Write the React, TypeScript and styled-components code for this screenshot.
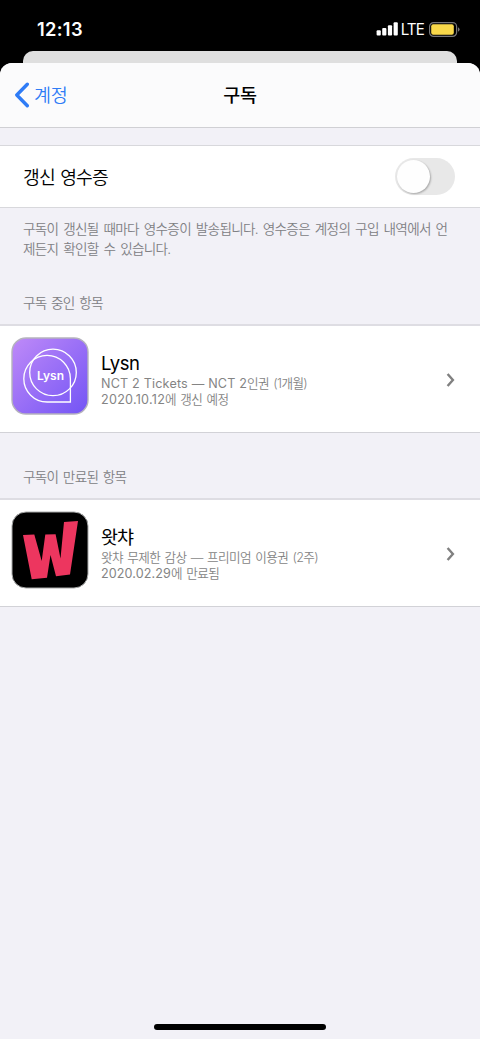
import React from "react";
import styled, { createGlobalStyle } from "styled-components";

const GlobalStyle = createGlobalStyle`
  * { box-sizing: border-box; }
  body { margin: 0; background: #000; }
`;

const Screen = styled.div`
  position: relative;
  display: flex;
  flex-direction: column;
  width: 480px;
  height: 1039px;
  overflow: hidden;
  background: #000;
  color: #000;
  font-family: Inter, "Noto Sans CJK KR", sans-serif;
  white-space: nowrap;
`;

const StatusBar = styled.div`
  display: flex;
  justify-content: space-between;
  align-items: center;
  flex: none;
  height: 51px;
  padding: 7px 20px 0 37px;
  color: #fff;
`;

const Clock = styled.span`
  font-size: 18.3px;
  font-weight: 600;
  letter-spacing: 0.3px;
`;

const StatusIcons = styled.div`
  display: flex;
  align-items: center;
  gap: 3px;
`;

const Network = styled.span`
  font-size: 15.2px;
  letter-spacing: -0.9px;
  margin: 0 2px 0 -0.5px;
`;

const BackSheet = styled.div`
  flex: none;
  height: 12px;
  margin: 0 23px;
  border-radius: 10px 10px 0 0;
  background: #dfdfdf;
`;

const Sheet = styled.main`
  display: flex;
  flex-direction: column;
  flex: 1;
  border-radius: 12px 12px 0 0;
  overflow: hidden;
  background: #f2f1f7;
`;

const NavBar = styled.header`
  display: grid;
  grid-template-columns: 1fr auto 1fr;
  align-items: center;
  flex: none;
  height: 65px;
  padding: 0 14px;
  background: #fbfbfc;
  border-bottom: 1px solid #d0d0d4;
`;

const BackButton = styled.a`
  display: flex;
  align-items: center;
  gap: 4px;
  color: #2f7cf6;
  font-size: 18.5px;
  font-weight: 350;
  letter-spacing: -0.3px;
`;

const BackLabel = styled.span`
  padding-bottom: 2px;
`;

const Title = styled.h1`
  margin: 0;
  padding-bottom: 2px;
  font-size: 18.5px;
  font-weight: 500;
  letter-spacing: -0.2px;
`;

const SettingRow = styled.section`
  display: flex;
  justify-content: space-between;
  align-items: center;
  flex: none;
  height: 63px;
  margin-top: 17px;
  padding: 0 25px 0 23px;
  background: #fff;
  border-top: 1px solid #d8d8dc;
  border-bottom: 1px solid #d8d8dc;
`;

const SettingLabel = styled.span`
  padding-bottom: 2px;
  font-size: 18.2px;
  font-weight: 350;
  letter-spacing: -0.8px;
  word-spacing: 1px;
`;

const Switch = styled.div`
  width: 60px;
  height: 37px;
  padding: 2px;
  border-radius: 19px;
  background: #e8e8e8;
`;

const Knob = styled.div`
  width: 33px;
  height: 33px;
  border-radius: 50%;
  background: #fefefe;
  box-shadow: 1px 1px 2px rgba(0, 0, 0, 0.28);
`;

const Note = styled.p`
  flex: none;
  height: 72px;
  margin: 0;
  padding: 12px 0 0 23px;
  color: #808084;
  font-size: 13.6px;
  font-weight: 350;
  line-height: 19.5px;
  letter-spacing: -0.72px;
  word-spacing: 1.8px;
`;

const SectionTitle = styled.h2<{ $height: number }>`
  flex: none;
  height: ${(p) => p.$height}px;
  display: flex;
  align-items: flex-end;
  margin: 0;
  padding: 0 23px 11px;
  color: #808084;
  font-size: 13.6px;
  font-weight: 350;
  line-height: 20px;
  letter-spacing: -0.72px;
  word-spacing: 1.4px;
`;

const AppRow = styled.section`
  display: flex;
  align-items: flex-start;
  flex: none;
  height: 109px;
  padding: 11px 24px 0 11px;
  background: #fff;
  border-top: 2px solid #dedde3;
  border-bottom: 1px solid #d2d2d7;
`;

const AppIcon = styled.svg`
  flex: none;
  width: 78px;
  height: 78px;
`;

const Info = styled.div`
  flex: 1;
  padding: 14px 0 0 12px;
`;

const AppName = styled.div<{ $spacing: number }>`
  height: 25px;
  font-size: 18.5px;
  font-weight: 400;
  line-height: 24px;
  letter-spacing: ${(p) => p.$spacing}px;
`;

const Detail = styled.div<{ $spacing: number }>`
  height: 16px;
  color: #848484;
  font-size: 12.6px;
  line-height: 16px;
  letter-spacing: ${(p) => p.$spacing}px;
`;

const Kr = styled.span<{ $spacing?: number }>`
  font-weight: 350;
  letter-spacing: ${(p) => p.$spacing ?? -0.62}px;
  word-spacing: 1.4px;
`;

const Chevron = styled.svg`
  width: 10px;
  height: 14px;
  margin-top: 36px;
`;

const HomeBar = styled.div`
  width: 172px;
  height: 6px;
  margin: auto auto 9px;
  border-radius: 3px;
  background: #000;
`;

const Disclosure = () => (
  <Chevron viewBox="0 0 10 14">
    <path d="M1.6 1 L6.9 7 L1.6 13" fill="none" stroke="#808080" strokeWidth="2.4" />
  </Chevron>
);

export default function App() {
  return (
    <Screen>
      <GlobalStyle />
      <StatusBar>
        <Clock>12:13</Clock>
        <StatusIcons>
          <svg width="22" height="14" viewBox="0 0 22 14" fill="#fff">
            <rect x="0.6" y="8.3" width="4.2" height="5.2" rx="1" />
            <rect x="6.2" y="6" width="4.2" height="7.5" rx="1" />
            <rect x="11.9" y="3.2" width="4.2" height="10.3" rx="1" />
            <rect x="17.6" y="0.2" width="4.2" height="13.3" rx="1" />
          </svg>
          <Network>LTE</Network>
          <svg width="31" height="15" viewBox="0 0 31 15">
            <rect x="0.6" y="0.6" width="27" height="13.8" rx="4" fill="none" stroke="#77777a" strokeWidth="1.2" />
            <rect x="2.2" y="2.3" width="22.6" height="10.4" rx="2" fill="#f8d84a" />
            <path d="M29 5.2 Q30.6 6 30.6 7.5 Q30.6 9 29 9.8 Z" fill="#77777a" />
          </svg>
        </StatusIcons>
      </StatusBar>
      <BackSheet />
      <Sheet>
        <NavBar>
          <BackButton>
            <svg width="16" height="26" viewBox="0 0 16 26">
              <path d="M13.3 2.2 L2.8 13 L13.3 23.8" fill="none" stroke="#2f7cf6" strokeWidth="3.4" strokeLinecap="round" strokeLinejoin="round" />
            </svg>
            <BackLabel>계정</BackLabel>
          </BackButton>
          <Title>구독</Title>
        </NavBar>
        <SettingRow>
          <SettingLabel>갱신 영수증</SettingLabel>
          <Switch>
            <Knob />
          </Switch>
        </SettingRow>
        <Note>
          구독이 갱신될 때마다 영수증이 발송됩니다. 영수증은 계정의 구입 내역에서 언
          <br />
          제든지 확인할 수 있습니다.
        </Note>
        <SectionTitle $height={44}>구독 중인 항목</SectionTitle>
        <AppRow>
          <AppIcon viewBox="0 0 78 78">
            <defs>
              <linearGradient id="violet" x1="0" y1="0" x2="1" y2="1">
                <stop offset="0" stopColor="#bf8af8" />
                <stop offset="1" stopColor="#7354f5" />
              </linearGradient>
            </defs>
            <rect x="1" y="1" width="76" height="76" rx="14" fill="url(#violet)" stroke="#b5b3bd" strokeWidth="1.4" />
            <g fill="none" stroke="#fff" strokeWidth="1.3">
              <circle cx="42" cy="35.4" r="23.3" />
              <path d="M59.4 65 H36.1 A23.3 23.3 0 1 1 59.4 41.7 Z" />
            </g>
            <text x="26" y="43" textLength="27" lengthAdjust="spacingAndGlyphs" fill="#fff" fontFamily="Inter, sans-serif" fontSize="11.5" fontWeight="600">Lysn</text>
          </AppIcon>
          <Info>
            <AppName $spacing={-0.45}>Lysn</AppName>
            <Detail $spacing={0.18}>
              NCT 2 Tickets — NCT 2<Kr>인권 (1개월)</Kr>
            </Detail>
            <Detail $spacing={0.25}>
              2020.10.12<Kr>에 갱신 예정</Kr>
            </Detail>
          </Info>
          <Disclosure />
        </AppRow>
        <SectionTitle $height={65}>구독이 만료된 항목</SectionTitle>
        <AppRow>
          <AppIcon viewBox="0 0 78 78">
            <rect x="1" y="1" width="76" height="76" rx="14" fill="#000" stroke="#a9aaaa" strokeWidth="1" />
            <path
              d="M12 24 L23.3 23.6 L30.7 50 L34.3 23.6 L44.6 23.2 L49.5 47.5 L53 11 L67 10 L59 63.4 L45 65.2 L39.5 44 L36 66.8 L20.7 68.2 Z"
              fill="#ed365f"
            />
          </AppIcon>
          <Info>
            <AppName $spacing={-0.9}>왓챠</AppName>
            <Detail $spacing={0}>
              <Kr>왓챠 무제한 감상 — 프리미엄 이용권 (2주)</Kr>
            </Detail>
            <Detail $spacing={0.1}>
              2020.02.29<Kr>에 만료됨</Kr>
            </Detail>
          </Info>
          <Disclosure />
        </AppRow>
        <HomeBar />
      </Sheet>
    </Screen>
  );
}
